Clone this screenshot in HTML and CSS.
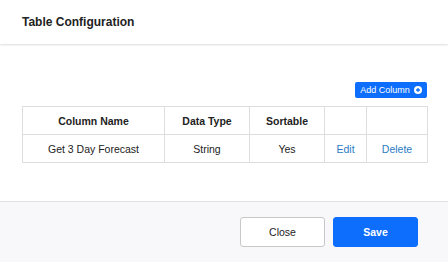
FILE: index.html
```html
<!DOCTYPE html>
<html lang="en">
<head>
  <meta charset="UTF-8" />
  <meta name="viewport" content="width=device-width, initial-scale=1.0"/>
  <title>Table Configuration</title>
  <link rel="stylesheet" href="styles.css">
</head>
<body>
  <div class="modal">
    <div class="modal-header">
      <h1>Table Configuration</h1>
    </div>

    <div class="modal-body">
      <div class="toolbar">
        <button class="btn-add">Add Column
          <svg width="8" height="8" viewBox="0 0 8 8">
            <circle cx="4" cy="4" r="4" fill="#fff"/>
            <path d="M4 2v4M2 4h4" stroke="#0d6efd" stroke-width="1.3"/>
          </svg>
        </button>
      </div>

      <table class="config-table">
        <thead>
          <tr>
            <th class="col-name">Column Name</th>
            <th class="col-type">Data Type</th>
            <th class="col-sort">Sortable</th>
            <th class="col-edit"></th>
            <th class="col-del"></th>
          </tr>
        </thead>
        <tbody>
          <tr>
            <td>Get 3 Day Forecast</td>
            <td>String</td>
            <td>Yes</td>
            <td><a href="#">Edit</a></td>
            <td><a href="#">Delete</a></td>
          </tr>
        </tbody>
      </table>
    </div>

    <div class="modal-footer">
      <button class="btn btn-close">Close</button>
      <button class="btn btn-save">Save</button>
    </div>
  </div>
</body>
</html>
```

FILE: styles.css
```css
* {
  box-sizing: border-box;
  margin: 0;
  padding: 0;
}

body {
  font-family: 'Liberation Sans', Arial, sans-serif;
  color: #222;
  background: #fff;
  width: 448px;
  height: 264px;
}

.modal {
  height: 262px;
  display: flex;
  flex-direction: column;
}

.modal-header {
  height: 44px;
  padding: 0 22px;
  display: flex;
  align-items: center;
  box-shadow: 0 1px 2px rgba(0, 0, 0, 0.14);
  position: relative;
}

.modal-header h1 {
  font-size: 12px;
  font-weight: bold;
  color: #222;
}

.modal-body {
  flex: 1;
  padding: 38px 22px 0 22px;
}

.toolbar {
  display: flex;
  justify-content: flex-end;
  padding-right: 0;
  margin-bottom: 8px;
}

.btn-add {
  height: 16px;
  width: 72px;
  margin-right: -1px;
  background: #0d6efd;
  color: #fff;
  border: none;
  border-radius: 2px;
  font-family: inherit;
  font-size: 9px;
  display: flex;
  align-items: center;
  justify-content: center;
  gap: 4px;
}

.config-table {
  width: 405px;
  border-collapse: collapse;
  table-layout: fixed;
  font-size: 10.5px;
}

.config-table th,
.config-table td {
  border: 1px solid #dedede;
  height: 28px;
  text-align: center;
  vertical-align: middle;
}

.config-table th {
  font-weight: bold;
  color: #222;
}

.config-table td a {
  color: #2b7bc4;
  text-decoration: none;
}

.col-name { width: 142px; }
.col-type { width: 85px; }
.col-sort { width: 75px; }
.col-edit { width: 42px; }
.col-del { width: 61px; }

.modal-footer {
  height: 61px;
  background: #f8f8fa;
  border-top: 1px solid #e2e2e4;
  display: flex;
  justify-content: flex-end;
  align-items: flex-start;
  gap: 8px;
  padding: 15px 30px 0 0;
}

.btn {
  width: 85px;
  height: 30px;
  border-radius: 3px;
  font-family: inherit;
  font-size: 10.5px;
}

.btn-close {
  background: #fff;
  border: 1px solid #c8c8c8;
  color: #222;
}

.btn-save {
  background: #0d6efd;
  border: 1px solid #0d6efd;
  color: #fff;
  font-weight: bold;
}
```
